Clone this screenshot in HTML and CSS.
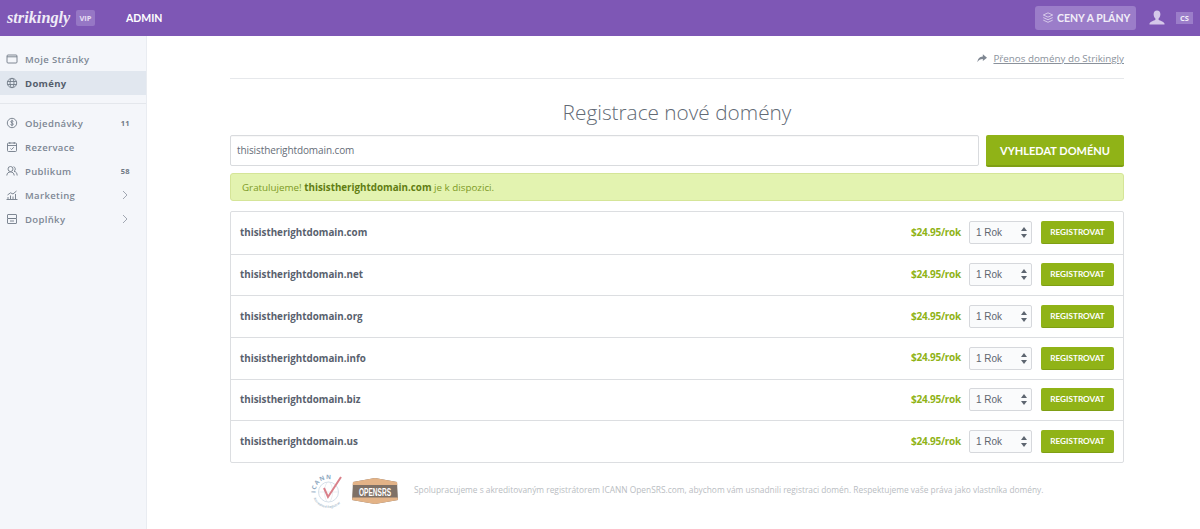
FILE: index.html
```html
<!DOCTYPE html>
<html lang="cs">
<head>
<meta charset="utf-8">
<title>Registrace nové domény</title>
<link rel="stylesheet" href="styles.css">
</head>
<body>
<header class="topbar">
  <div class="brand">
    <span class="logo">strikingly</span>
    <span class="vip">VIP</span>
    <span class="admin">ADMIN</span>
  </div>
  <div class="top-right">
    <a class="plans">
      <svg class="plans-icon" viewBox="0 0 14 14" width="12" height="12" fill="none" stroke="currentColor" stroke-width="1.1"><path d="M7 1 12.5 3.5 7 6 1.500 3.500Z"/><path d="M1.500 6.500 7 9 12.500 6.500"/><path d="M1.500 9.500 7 12 12.500 9.500"/></svg>
      <span>CENY A PLÁNY</span>
    </a>
    <svg class="user" viewBox="0 0 16 16" width="16" height="16"><path fill="currentColor" d="M8 0.500c2.200 0 3.400 1.600 3.400 3.700 0 1.700-.8 3.300-1.800 4.200v1.300c0 .6 4.900 1.500 5.900 3.900v.9H.5v-.9c1-2.400 5.900-3.300 5.900-3.900V8.400C5.400 7.500 4.600 5.900 4.600 4.200 4.600 2.100 5.800.5 8 .5Z"/></svg>
    <span class="lang">CS</span>
  </div>
</header>
<div class="shell">
  <nav class="sidebar">
    <ul class="nav-group">
      <li class="nav-item">
        <svg class="nav-icon" viewBox="0 0 12 12"><rect x="1" y="2" width="10" height="8" rx="1"/><path d="M1 3.800H11"/></svg>
        <span class="nav-label">Moje Stránky</span>
      </li>
      <li class="nav-item active">
        <svg class="nav-icon" viewBox="0 0 12 12"><circle cx="6" cy="6" r="4.700"/><ellipse cx="6" cy="6" rx="2" ry="4.700"/><path d="M1.300 4.500H10.700M1.300 7.500H10.700"/></svg>
        <span class="nav-label">Domény</span>
      </li>
    </ul>
    <ul class="nav-group second">
      <li class="nav-item">
        <svg class="nav-icon" viewBox="0 0 12 12"><circle cx="6" cy="6" r="4.700"/><path d="M7.400 4.400C7 3.700 5 3.600 4.800 4.600 4.600 6 7.500 5.800 7.300 7.300 7.100 8.400 5 8.300 4.500 7.500M6 2.800V9.200"/></svg>
        <span class="nav-label">Objednávky</span>
        <span class="count">11</span>
      </li>
      <li class="nav-item">
        <svg class="nav-icon" viewBox="0 0 12 12"><rect x="1.500" y="2" width="9" height="8.500" rx="1"/><path d="M1.500 4.500H10.500M3.800 1V3M8.200 1V3M4.500 7.500 5.500 8.500 7.800 6.300"/></svg>
        <span class="nav-label">Rezervace</span>
      </li>
      <li class="nav-item">
        <svg class="nav-icon" viewBox="0 0 12 12"><circle cx="4.500" cy="4" r="2.500"/><path d="M.8 10.500C1 8 2.500 7 4.500 7S8 8 8.200 10.500M7.500 1.700A2.500 2.500 0 0 1 8 6.300C10 6.500 11 8 11.200 10.500"/></svg>
        <span class="nav-label">Publikum</span>
        <span class="count">58</span>
      </li>
      <li class="nav-item">
        <svg class="nav-icon" viewBox="0 0 12 12"><path d="M.5 10.500H11.500M2 10V8M4.500 10V6.500M7 10V7.500M9.500 10V5M1.500 6 4.500 3.800 7 5 10.500 2"/></svg>
        <span class="nav-label">Marketing</span>
        <svg class="chevron" viewBox="0 0 6 10"><path d="M1 1 5 5 1 9"/></svg>
      </li>
      <li class="nav-item">
        <svg class="nav-icon" viewBox="0 0 12 12"><rect x="1.500" y="1.500" width="9" height="4" rx=".5"/><rect x="1.500" y="5.500" width="9" height="5" rx=".5"/><path d="M4 8H8"/></svg>
        <span class="nav-label">Doplňky</span>
        <svg class="chevron" viewBox="0 0 6 10"><path d="M1 1 5 5 1 9"/></svg>
      </li>
    </ul>
  </nav>
  <main class="content">
    <div class="transfer-row">
      <svg class="share" viewBox="0 0 12 10" width="10" height="9"><path fill="currentColor" d="M7 0 12 4 7 8V5.500C4 5.500 2 6.500 .5 9.500 .8 5.500 3 2.700 7 2.500Z"/></svg>
      <a class="transfer">Přenos domény do Strikingly</a>
    </div>
    <h1 class="title">Registrace nové domény</h1>
    <div class="search">
      <div class="search-input">thisistherightdomain.com</div>
      <button class="search-btn">VYHLEDAT DOMÉNU</button>
    </div>
    <div class="notice">Gratulujeme! <strong>thisistherightdomain.com</strong> je k dispozici.</div>
    <div class="results">
      <div class="result">
        <span class="domain">thisistherightdomain.com</span>
        <span class="price">$24.95/rok</span>
        <span class="select">1 Rok<svg class="updown" viewBox="0 0 6 11" width="6" height="11"><path fill="currentColor" d="M3 0 6 4H0ZM3 11 0 7H6Z"/></svg></span>
        <button class="reg">REGISTROVAT</button>
      </div>
      <div class="result">
        <span class="domain">thisistherightdomain.net</span>
        <span class="price">$24.95/rok</span>
        <span class="select">1 Rok<svg class="updown" viewBox="0 0 6 11" width="6" height="11"><path fill="currentColor" d="M3 0 6 4H0ZM3 11 0 7H6Z"/></svg></span>
        <button class="reg">REGISTROVAT</button>
      </div>
      <div class="result">
        <span class="domain">thisistherightdomain.org</span>
        <span class="price">$24.95/rok</span>
        <span class="select">1 Rok<svg class="updown" viewBox="0 0 6 11" width="6" height="11"><path fill="currentColor" d="M3 0 6 4H0ZM3 11 0 7H6Z"/></svg></span>
        <button class="reg">REGISTROVAT</button>
      </div>
      <div class="result">
        <span class="domain">thisistherightdomain.info</span>
        <span class="price">$24.95/rok</span>
        <span class="select">1 Rok<svg class="updown" viewBox="0 0 6 11" width="6" height="11"><path fill="currentColor" d="M3 0 6 4H0ZM3 11 0 7H6Z"/></svg></span>
        <button class="reg">REGISTROVAT</button>
      </div>
      <div class="result">
        <span class="domain">thisistherightdomain.biz</span>
        <span class="price">$24.95/rok</span>
        <span class="select">1 Rok<svg class="updown" viewBox="0 0 6 11" width="6" height="11"><path fill="currentColor" d="M3 0 6 4H0ZM3 11 0 7H6Z"/></svg></span>
        <button class="reg">REGISTROVAT</button>
      </div>
      <div class="result">
        <span class="domain">thisistherightdomain.us</span>
        <span class="price">$24.95/rok</span>
        <span class="select">1 Rok<svg class="updown" viewBox="0 0 6 11" width="6" height="11"><path fill="currentColor" d="M3 0 6 4H0ZM3 11 0 7H6Z"/></svg></span>
        <button class="reg">REGISTROVAT</button>
      </div>
    </div>
    <div class="partners">
      <svg class="icann" viewBox="0 0 36 38" width="36" height="38" role="img" aria-label="ICANN Accredited Registrar">
        <defs>
          <path id="arc-top" d="M5.500 21A13 13 0 0 1 30 14"/>
          <path id="arc-bottom" d="M3.500 26A16.200 16.200 0 0 0 33.500 26"/>
        </defs>
        <circle cx="18.500" cy="20" r="10" fill="none" stroke="#d5e0ea" stroke-width="1"/>
        <ellipse cx="18.500" cy="20" rx="4" ry="10" fill="none" stroke="#e2e8ee" stroke-width=".7"/>
        <path d="M8.500 20H28.500" stroke="#e2e8ee" stroke-width=".7"/>
        <text class="icann-top"><textPath href="#arc-top">ICANN</textPath></text>
        <text class="icann-bottom"><textPath href="#arc-bottom">Accredited Registrar</textPath></text>
        <path d="M14 16 18 25 31 5" fill="none" stroke="#d9808a" stroke-width="2"/>
      </svg>
      <svg class="opensrs" viewBox="0 0 46 26" width="46" height="26" role="img" aria-label="OpenSRS">
        <path d="M1 4 23 0 45 4 46 22 23 26 0 22Z" fill="#7f7166"/>
        <path d="M1 4 23 0 45 4 45.300 7H.7Z" fill="#e3b387"/>
        <path d="M.3 19.500H45.700L46 22 23 26 0 22Z" fill="#e3b387"/>
        <text class="srs-name" transform="translate(7 17.500) scale(1 1.250)" textLength="32" lengthAdjust="spacingAndGlyphs">OPENSRS</text>
      </svg>
      <p class="partners-text">Spolupracujeme s akreditovaným registrátorem ICANN OpenSRS.com, abychom vám usnadnili registraci domén. Respektujeme vaše práva jako vlastníka domény.</p>
    </div>
  </main>
</div>
</body>
</html>
```
FILE: styles.css
```css
* { box-sizing: border-box; }
html, body { margin: 0; padding: 0; }
body {
  width: 1200px;
  height: 529px;
  overflow: hidden;
  background: #fff;
  font-family: "Open Sans", sans-serif;
  color: #636a75;
}
.topbar {
  height: 36px;
  background: #7e57b5;
  display: flex;
  align-items: center;
  justify-content: space-between;
  color: #fff;
}
.brand { display: flex; align-items: center; padding-left: 7px; }
.logo {
  font-family: "Liberation Serif", serif;
  font-style: italic;
  font-weight: 700;
  font-size: 16.300px;
  width: 69px;
  color: #f0ebf7;
}
.vip {
  width: 19px;
  height: 16px;
  background: #9677c5;
  border-radius: 2px;
  font: 700 7.500px/16px "Open Sans", sans-serif;
  text-align: center;
  color: #e6def2;
}
.admin {
  font: 700 10.500px "Lato", sans-serif;
  margin-left: 31px;
}
.top-right { display: flex; align-items: center; }
.plans {
  display: flex;
  align-items: center;
  gap: 3px;
  height: 24px;
  width: 101px;
  padding-left: 7px;
  background: #9b7dc9;
  border-radius: 3px;
  font: 700 10.500px "Lato", sans-serif;
  white-space: nowrap;
  color: #f1edf8;
}
.plans-icon { color: #d9cdeb; flex: none; }
.user { color: #d5c8e9; margin-left: 13px; }
.lang {
  width: 17px;
  height: 12px;
  margin: 0 7px 0 11px;
  background: #9b7dc9;
  font: 700 7.500px/12px "Open Sans", sans-serif;
  text-align: center;
  color: #f1edf8;
}
.shell { display: flex; height: 493px; }
.sidebar {
  width: 147px;
  flex: none;
  background: #f4f6fa;
  border-right: 1px solid #e9ecf1;
  padding-top: 11px;
}
.nav-group { list-style: none; margin: 0; padding: 0; }
.nav-group.second {
  margin-top: 8px;
  padding-top: 7px;
  border-top: 1px solid #e4e7ec;
}
.nav-item {
  height: 24px;
  display: flex;
  align-items: center;
  padding-left: 6px;
  font-size: 9.500px;
  font-weight: 600;
  letter-spacing: .35px;
  color: #7d8794;
}
.nav-item.active { background: #e1e7ef; color: #555e6c; font-weight: 700; }
.nav-icon {
  width: 12px;
  height: 12px;
  flex: none;
  fill: none;
  stroke: #727c88;
  stroke-width: .9;
  margin-right: 7px;
}
.nav-label { flex: 1; }
.count { font-size: 7.500px; font-weight: 700; margin-right: 16px; color: #6f7884; }
.chevron {
  width: 6px;
  height: 10px;
  fill: none;
  stroke: #8b93a0;
  stroke-width: .8;
  margin-right: 18px;
}
.content { width: 894px; margin-left: 83px; }
.transfer-row {
  height: 43px;
  padding-top: 3px;
  display: flex;
  align-items: center;
  justify-content: flex-end;
  gap: 6px;
  border-bottom: 1px solid #e6e8eb;
  color: #7f8792;
}
.transfer {
  font-size: 9.800px;
  text-decoration: underline;
  color: #8a919b;
}
.title {
  margin: 20px 0 0;
  height: 36px;
  font-size: 20.800px;
  font-weight: 300;
  line-height: 26px;
  text-align: center;
  color: #626a75;
}
.search { display: flex; justify-content: space-between; }
.search-input {
  width: 749px;
  height: 31px;
  border: 1px solid #d9dbde;
  border-radius: 2px;
  padding-left: 6px;
  font-size: 10px;
  letter-spacing: -.1px;
  line-height: 29px;
  color: #666d78;
  box-shadow: inset 0 1px 1px rgba(0,0,0,.03);
}
.search-btn {
  width: 138px;
  height: 32px;
  border: 0;
  border-bottom: 2px solid #7f9f14;
  border-radius: 2px;
  background: #90b317;
  color: #fff;
  font: 700 11px "Lato", sans-serif;
  padding: 0;
}
.notice {
  margin-top: 6px;
  height: 28px;
  background: #e3f3b0;
  border: 1px solid #d5e598;
  border-radius: 3px;
  padding-left: 11px;
  font-size: 9.800px;
  line-height: 27px;
  color: #7d9a25;
}
.notice strong { color: #617d13; }
.results {
  margin-top: 10px;
  border: 1px solid #dcdee1;
  border-radius: 2px;
}
.result {
  height: 41.670px;
  display: flex;
  align-items: center;
  padding: 0 9px;
  border-top: 1px solid #dcdee1;
}
.result:first-child { border-top: 0; }
.domain {
  flex: 1;
  font-size: 9.800px;
  font-weight: 700;
  color: #59616d;
}
.price {
  font-size: 10px;
  letter-spacing: -.25px;
  font-weight: 700;
  color: #90b317;
  margin: 0 8px 2px 0;
}
.select {
  width: 63px;
  height: 23px;
  display: flex;
  align-items: center;
  justify-content: space-between;
  padding: 0 4px 0 6px;
  border: 1px solid #d6d8dc;
  border-radius: 2px;
  background: #fafbfc;
  font: 10px "Liberation Sans", sans-serif;
  color: #5f6670;
}
.updown { color: #5d6570; }
.reg {
  width: 73px;
  height: 23px;
  margin-left: 9px;
  border: 0;
  border-bottom: 1px solid #7f9f14;
  border-radius: 2px;
  background: #90b317;
  color: #fff;
  font: 700 8.200px "Lato", sans-serif;
  padding: 0;
}
.partners {
  display: flex;
  align-items: flex-start;
  margin-top: 9px;
  padding-left: 80px;
}
.icann { flex: none; }
.icann-top { font: 700 6px "Open Sans", sans-serif; letter-spacing: 1px; fill: #8ea8bf; }
.icann-bottom { font: 600 3.300px "Open Sans", sans-serif; fill: #a4b8ca; }
.opensrs { flex: none; margin: 6px 0 0 6px; }
.srs-name {
  font: 700 8px "Liberation Sans", sans-serif;
  fill: #fff;
}
.partners-text {
  margin: 12px 0 0 16px;
  font-size: 8.370px;
  white-space: nowrap;
  color: #b9bdc2;
}
```
